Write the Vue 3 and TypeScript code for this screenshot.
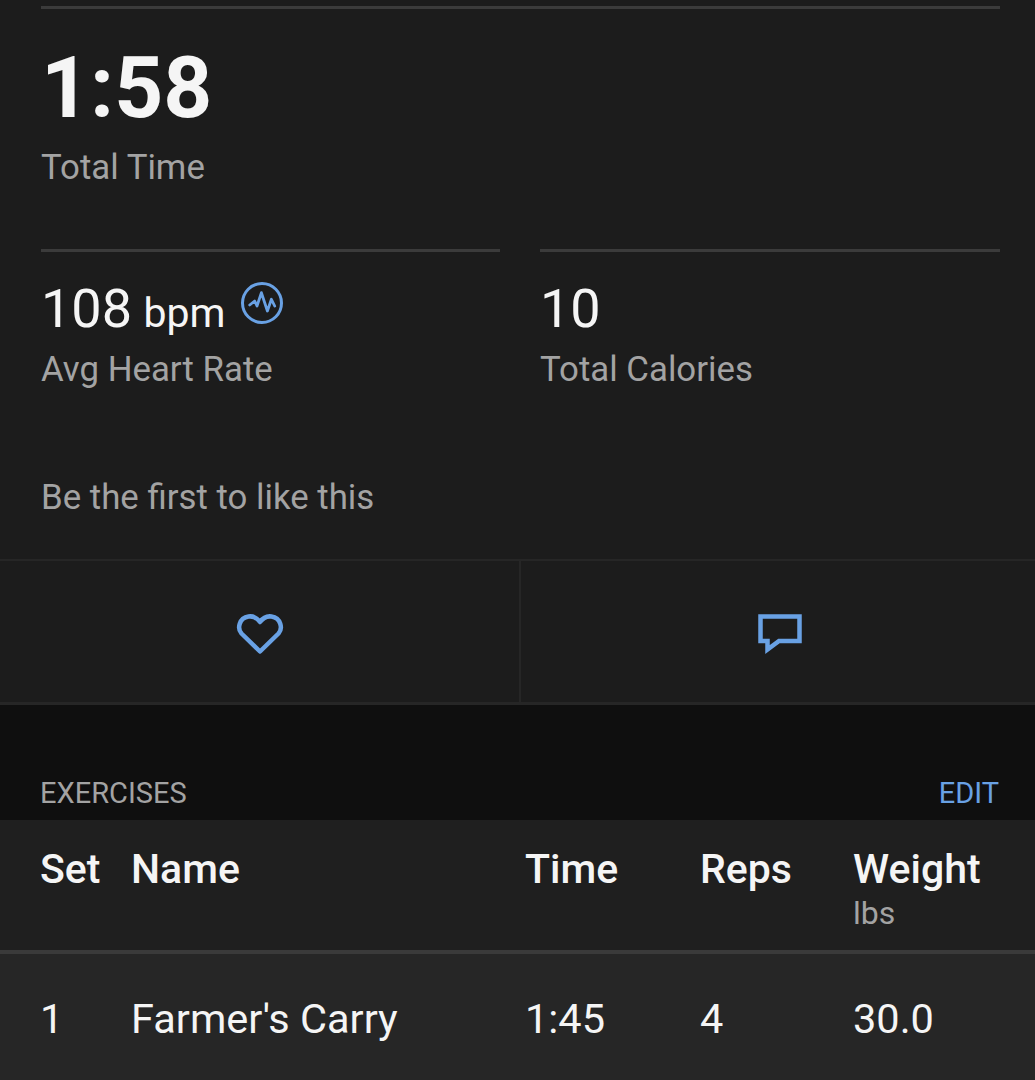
<script setup lang="ts">
const columns = [
  { label: "Set" },
  { label: "Name" },
  { label: "Time" },
  { label: "Reps" },
  { label: "Weight", unit: "lbs" },
];
const rows = [["1", "Farmer's Carry", "1:45", "4", "30.0"]];
</script>

<template>
  <div class="page">
    <section class="card">
      <div class="stats">
        <div class="stat total">
          <div class="big">1:58</div>
          <div class="label">Total Time</div>
        </div>
        <div class="pair">
          <div class="stat">
            <div class="value">
              108 <span class="unit">bpm</span>
              <svg class="pulse" width="44" height="44" viewBox="0 0 44 44" fill="none" stroke="#69a1e4">
                <circle cx="22" cy="22" r="19.5" stroke-width="3" />
                <path d="M9.700 24L14.700 20 17 25 21.400 11.700 27.400 30 31.400 18.300 34.700 25" stroke-width="2.800" stroke-linejoin="round" stroke-linecap="round" />
              </svg>
            </div>
            <div class="label">Avg Heart Rate</div>
          </div>
          <div class="stat">
            <div class="value">10</div>
            <div class="label">Total Calories</div>
          </div>
        </div>
        <div class="likes">Be the first to like this</div>
      </div>
      <div class="actions">
        <div class="action">
          <svg width="48" height="42" viewBox="0 0 48 42" fill="none" stroke="#69a1e4" stroke-width="4.500" stroke-linejoin="round">
            <path d="M24 38.500L5.500 20.500C1 15.500 3 5 12.500 3.500 17.500 2.800 21.500 5.500 24 9 26.500 5.500 30.500 2.800 35.500 3.500 45 5 47 15.500 42.500 20.500Z" />
          </svg>
        </div>
        <div class="action">
          <svg width="44" height="40" viewBox="0 0 44 40" fill="none" stroke="#69a1e4" stroke-width="4.500" stroke-linejoin="miter">
            <path d="M2.500 2.500H41.500V27H21L9.500 35.500V27H2.500Z" />
          </svg>
        </div>
      </div>
    </section>

    <section class="band">
      <span class="band-title">EXERCISES</span>
      <span class="edit">EDIT</span>
    </section>

    <section class="table">
      <div class="grid head">
        <div v-for="col in columns" :key="col.label">
          <div class="th">{{ col.label }}</div>
          <div v-if="col.unit" class="th-unit">{{ col.unit }}</div>
        </div>
      </div>
      <div v-for="(row, i) in rows" :key="i" class="grid row">
        <div v-for="(cell, j) in row" :key="j">{{ cell }}</div>
      </div>
    </section>
  </div>
</template>

<style>
html, body {
  background: #1c1c1c;
}
</style>

<style scoped>
.page {
  width: 1035px;
  height: 1080px;
  overflow: hidden;
  font-family: Roboto, "Liberation Sans", sans-serif;
  color: #f5f5f5;
}
.card {
  background: #1c1c1c;
}
.stats {
  padding: 6px 35px 0 41px;
  height: 561px;
  box-sizing: border-box;
  border-bottom: 2px solid #262626;
}
.stat {
  border-top: 3px solid #3b3b3b;
}
.total {
  height: 240px;
  box-sizing: border-box;
}
.big {
  font-size: 85.500px;
  font-weight: 700;
  line-height: 100px;
  margin-top: 29px;
}
.label {
  font-size: 34.800px;
  line-height: 40px;
  color: #a3a3a3;
}
.total .label {
  margin-top: 9px;
}
.pair {
  display: grid;
  grid-template-columns: 459px 460px;
  gap: 40px;
  margin-top: 3px;
}
.value {
  font-size: 54px;
  line-height: 60px;
  margin: 27px 0 10px;
  height: 60px;
  position: relative;
}
.unit {
  font-size: 41px;
  margin-left: -2px;
}
.pulse {
  position: absolute;
  left: 199px;
  top: 2px;
}
.likes {
  font-size: 34.800px;
  line-height: 40px;
  color: #a3a3a3;
  margin-top: 88px;
}
.actions {
  display: grid;
  grid-template-columns: 521px 1fr;
  height: 144px;
  border-bottom: 3px solid #262626;
  box-sizing: border-box;
}
.action {
  display: flex;
  align-items: center;
  justify-content: center;
  padding-top: 4px;
  padding-left: 1px;
}
.action:first-child {
  border-right: 2px solid #262626;
}
.action:last-child {
  padding-left: 4px;
}
.band {
  background: #0f0f0f;
  height: 115px;
  display: flex;
  align-items: flex-end;
  justify-content: space-between;
  padding: 0 36px 9px 40px;
  box-sizing: border-box;
  font-size: 29px;
  line-height: 36px;
}
.band-title {
  color: #a3a3a3;
}
.edit {
  color: #69a1e4;
}
.table {
  background: #1f1f1f;
}
.grid {
  display: grid;
  grid-template-columns: 91px 394px 175px 153px 1fr;
  padding-left: 40px;
}
.head {
  height: 134px;
  padding-top: 26px;
  box-sizing: border-box;
  border-bottom: 4px solid #3a3a3a;
}
.th {
  font-size: 41px;
  font-weight: 500;
  line-height: 46px;
}
.th-unit {
  font-size: 32px;
  line-height: 42px;
  color: #a3a3a3;
}
.row {
  background: #262626;
  height: 130px;
  align-items: center;
  font-size: 41.500px;
  line-height: 46px;
  padding-bottom: 1px;
  box-sizing: border-box;
}
</style>
